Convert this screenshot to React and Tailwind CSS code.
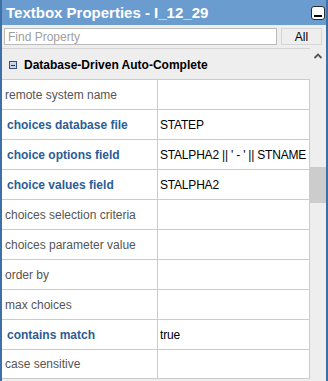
import React from "react";

const rows = [
  { label: "remote system name", value: "" },
  { label: "choices database file", value: "STATEP", bold: true },
  { label: "choice options field", value: "STALPHA2 || ' - ' || STNAME", bold: true },
  { label: "choice values field", value: "STALPHA2", bold: true },
  { label: "choices selection criteria", value: "" },
  { label: "choices parameter value", value: "" },
  { label: "order by", value: "" },
  { label: "max choices", value: "" },
  { label: "contains match", value: "true", bold: true },
  { label: "case sensitive", value: "" },
];

export default function App() {
  return (
    <div
      className="w-[328px] h-[381px] flex flex-col overflow-hidden bg-[#eeeeee] border-x-2 border-[#3d6fa8]"
      style={{ fontFamily: '"Liberation Sans", Arial, sans-serif' }}
    >
      <div className="h-[25px] shrink-0 bg-[#6b9cd0] flex items-center justify-between pl-[4px] pr-[1px]">
        <span className="text-[15px] font-bold text-white leading-none">
          Textbox Properties - I_12_29
        </span>
        <div className="w-[14px] h-[14px] bg-white border border-[#2a2a2a] rounded-[3px] flex items-end justify-center pb-[2px]">
          <div className="w-[8px] h-[2px] bg-black" />
        </div>
      </div>

      <div className="h-[23px] shrink-0 flex items-center gap-[4px] pl-[2px] pr-[2px]">
        <div className="w-[273px] h-[17px] bg-white border border-[#bbbbbb] flex items-center px-[3px] text-[12px] text-[#a0a0a0]">
          Find Property
        </div>
        <div className="w-[41px] h-[17px] bg-[#eeeeee] border border-[#d6d6d6] flex items-center justify-center text-[12px] text-black">
          All
        </div>
      </div>

      <div className="flex flex-1 min-h-0">
        <div className="w-[308px] shrink-0 flex flex-col">
          <div className="h-[31px] shrink-0 border-t border-[#d4d4d4] flex items-center gap-[7px] pl-[7px] pt-[2px]">
            <div className="w-[8px] h-[8px] border border-[#36517a] bg-[#c9d6ea] flex items-center justify-center">
              <div className="w-[4px] h-[1px] bg-[#1e3458]" />
            </div>
            <span className="text-[12px] font-bold text-black">Database-Driven Auto-Complete</span>
          </div>
          {rows.map((r, i) => (
            <div
              key={i}
              className={`h-[30px] shrink-0 flex bg-white border-t border-r border-[#cccccc] ${
                i === rows.length - 1 ? "border-b" : ""
              }`}
            >
              <div
                className={`w-[156px] shrink-0 border-r border-[#cccccc] flex items-center whitespace-nowrap text-[12px] ${
                  r.bold ? "pl-[5px] font-bold text-[#2b5d97]" : "pl-[3px] text-[#555555]"
                }`}
              >
                {r.label}
              </div>
              <div className="flex-1 flex items-center pl-[2px] whitespace-nowrap overflow-hidden text-[12px] tracking-[-0.2px] text-black">
                {r.value}
              </div>
            </div>
          ))}
        </div>
        <div className="w-[16px] shrink-0 flex flex-col items-center">
          <svg width="10" height="8" viewBox="0 0 10 8" className="mt-[4px]">
            <path d="M1.5 6 L5 2.5 L8.5 6" fill="none" stroke="#555" strokeWidth="1.8" />
          </svg>
          <div className="w-[16px] h-[36px] bg-[#cccccc] mt-[107px]" />
        </div>
      </div>
    </div>
  );
}
